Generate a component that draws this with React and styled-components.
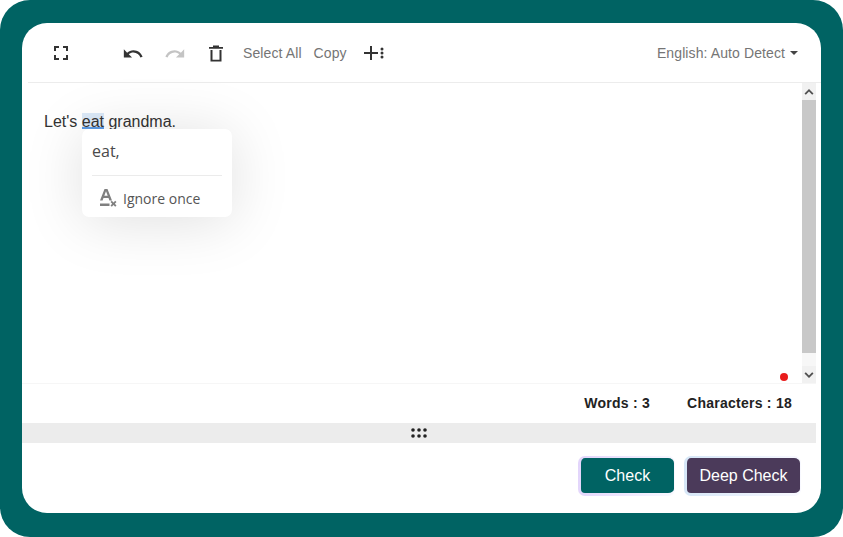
import React from 'react';
import styled, { createGlobalStyle } from 'styled-components';

const Global = createGlobalStyle`
  html, body { margin: 0; padding: 0; background: #fff; overflow: hidden; }
  * { box-sizing: border-box; }
`;

const Frame = styled.div`
  width: 843px;
  height: 537px;
  padding: 23px 22px 24px 22px;
  background: #006363;
  border-radius: 30px;
  font-family: "Liberation Sans", Arial, sans-serif;
`;

const Card = styled.div`
  width: 799px;
  height: 490px;
  background: #fff;
  border-radius: 25px;
  display: flex;
  flex-direction: column;
  overflow: hidden;
`;

const Toolbar = styled.div`
  height: 60px;
  margin-left: 6px;
  border-bottom: 1px solid #ececec;
  display: flex;
  align-items: center;
  padding: 0 23px 0 0;
  flex: none;
`;

const IconSlot = styled.span`
  display: inline-flex;
  align-items: center;
  justify-content: center;
  width: ${p => p.$w}px;
  margin-left: ${p => p.$ml || 0}px;
  color: ${p => (p.$off ? '#c4c4c4' : '#333')};
`;

const ToolText = styled.span`
  font-size: 14px;
  letter-spacing: 0.1px;
  color: #757575;
  margin-left: ${p => p.$ml}px;
`;

const Lang = styled.span`
  margin-left: auto;
  font-size: 14px;
  letter-spacing: 0.1px;
  color: #757575;
  display: flex;
  align-items: center;
  gap: 5px;
`;

const Caret = styled.i`
  width: 0;
  height: 0;
  border-left: 4px solid transparent;
  border-right: 4px solid transparent;
  border-top: 4px solid #444;
`;

const EditorRow = styled.div`
  height: 301px;
  width: 794px;
  position: relative;
  display: flex;
  flex: none;
  border-bottom: 1px solid #f6f6f6;
`;

const Editor = styled.div`
  flex: 1;
  padding: 30px 0 0 22px;
  font-size: 16px;
  line-height: 18px;
  color: #333;
`;

const Flagged = styled.span`
  display: inline-block;
  height: 16px;
  background: #dbe9f8;
  border-bottom: 2px solid #5b9be6;
`;

const Scrollbar = styled.div`
  width: 14px;
  display: flex;
  flex-direction: column;
  background: #f7f7f7;
  flex: none;
`;

const ScrollBtn = styled.div`
  height: 17px;
  background: #f1f1f1;
  display: flex;
  align-items: center;
  justify-content: center;
  color: #505050;
`;

const Thumb = styled.div`
  height: 253px;
  background: #c8c8c8;
`;

const Gap = styled.div`
  flex: 1;
`;

const Popup = styled.div`
  position: absolute;
  left: 60px;
  top: 46px;
  width: 150px;
  height: 88px;
  padding: 0 10px;
  background: #fff;
  border-radius: 7px;
  box-shadow: 0 4px 60px rgba(0, 0, 0, 0.13);
  font-family: "Open Sans", sans-serif;
  color: #4a4a4a;
`;

const Suggestion = styled.div`
  height: 47px;
  padding-top: 10px;
  font-size: 16px;
  line-height: 24px;
  border-bottom: 1px solid #ebebeb;
`;

const Ignore = styled.div`
  display: flex;
  align-items: center;
  gap: 6px;
  height: 44px;
  padding-left: 7px;
  font-size: 14px;
  color: #555;
`;

const IgnoreIcon = styled.span`
  display: inline-flex;
  color: #808080;
`;

const Dot = styled.span`
  position: absolute;
  right: 28px;
  bottom: 2px;
  width: 8px;
  height: 8px;
  border-radius: 50%;
  background: #e91c1c;
`;

const Stats = styled.div`
  height: 39px;
  flex: none;
  display: flex;
  align-items: center;
  justify-content: flex-end;
  gap: 37px;
  padding: 0 29px 2px 0;
  font-size: 14px;
  font-weight: 700;
  letter-spacing: 0.25px;
  color: #222;
`;

const Grip = styled.div`
  width: 794px;
  height: 20px;
  background: #ececec;
  flex: none;
  display: flex;
  align-items: center;
  justify-content: center;
`;

const Actions = styled.div`
  flex: 1;
  display: flex;
  align-items: center;
  justify-content: flex-end;
  gap: 9px;
  padding: 0 20px 5px 0;
`;

const ActionButton = styled.button`
  width: ${p => p.$w}px;
  height: 40px;
  border-style: solid;
  border-color: transparent;
  border-width: 2px 1px 3px 3px;
  border-radius: 7px;
  background:
    linear-gradient(${p => p.$bg}, ${p => p.$bg}) padding-box,
    linear-gradient(100deg, ${p => p.$from}, #f9f9ff) border-box;
  color: #fff;
  font-family: "Liberation Sans", Arial, sans-serif;
  font-size: 16px;
  padding: 2px 0 0;
`;

const Svg = ({ w = 24, h = 24, box = '0 0 24 24', children }) => (
  <svg width={w} height={h} viewBox={box} fill="currentColor">{children}</svg>
);

const App = () => (
  <Frame>
    <Global />
    <Card>
      <Toolbar>
        <IconSlot $w={24} $ml={21}>
          <Svg><path d="M5 5h5v2H7v3H5zM14 5h5v5h-2V7h-3zM5 14h2v3h3v2H5zM17 14h2v5h-5v-2h3z" /></Svg>
        </IconSlot>
        <IconSlot $w={24} $ml={48}>
          <Svg w={22} h={22} box="0 -1 24 24"><path d="M12.500 8c-2.650 0-5.050 1-6.900 2.600L2 7v9h9l-3.620-3.620c1.390-1.160 3.160-1.880 5.120-1.880 3.540 0 6.550 2.310 7.600 5.500l2.370-.78C21.080 11.030 17.150 8 12.500 8z" /></Svg>
        </IconSlot>
        <IconSlot $w={24} $ml={18} $off>
          <Svg w={22} h={22} box="0 -1 24 24"><path d="M11.500 8c2.650 0 5.050 1 6.900 2.600L22 7v9h-9l3.620-3.620C15.230 11.220 13.460 10.500 11.500 10.500c-3.540 0-6.550 2.310-7.600 5.500l-2.370-.78C2.920 11.030 6.850 8 11.500 8z" /></Svg>
        </IconSlot>
        <IconSlot $w={24} $ml={17}>
          <Svg><path d="M9 4.500h6V6h4v1.800H5V6h4zM6.500 9h2v9.700h7V9h2v11.500h-11z" /></Svg>
        </IconSlot>
        <ToolText $ml={15}>Select All</ToolText>
        <ToolText $ml={12}>Copy</ToolText>
        <IconSlot $w={24} $ml={15}>
          <Svg>
            <path d="M2 11h6V5h2v6h6v2h-6v6H8v-6H2z" />
            <circle cx="20" cy="8" r="1.500" />
            <circle cx="20" cy="12" r="1.500" />
            <circle cx="20" cy="16" r="1.500" />
          </Svg>
        </IconSlot>
        <Lang>English: Auto Detect <Caret /></Lang>
      </Toolbar>
      <EditorRow>
        <Editor>
          Let's <Flagged>eat</Flagged> grandma.
        </Editor>
        <Popup>
          <Suggestion>eat,</Suggestion>
          <Ignore>
            <IgnoreIcon>
              <Svg w={18} h={20} box="0 0 18 20">
                <path d="M5.500 1h3l4.500 11.500h-2.600l-.9-2.500H4.500l-.9 2.500H1zM5.300 7.800h3.400L7 3.200zM1 15.500h9.500V18H1z" />
                <path d="M11.500 14l1.300-1.300 1.700 1.700 1.700-1.700 1.300 1.300-1.700 1.700 1.700 1.700-1.300 1.300-1.700-1.700-1.700 1.700-1.300-1.300 1.700-1.700z" />
              </Svg>
            </IgnoreIcon>
            Ignore once
          </Ignore>
        </Popup>
        <Scrollbar>
          <ScrollBtn>
            <Svg w={10} h={8} box="0 0 10 8"><path d="M5 1l4.500 4.500L8.200 6.800 5 3.600 1.800 6.800.5 5.500z" /></Svg>
          </ScrollBtn>
          <Thumb />
          <Gap />
          <ScrollBtn>
            <Svg w={10} h={8} box="0 0 10 8"><path d="M5 7L.5 2.500 1.800 1.200 5 4.400l3.200-3.200 1.300 1.300z" /></Svg>
          </ScrollBtn>
        </Scrollbar>
        <Dot />
      </EditorRow>
      <Stats>
        <span>Words : 3</span>
        <span>Characters : 18</span>
      </Stats>
      <Grip>
        <Svg w={16} h={12} box="0 0 16 12">
          {[2, 8, 14].map(x => [3, 9].map(y => <circle key={`${x}-${y}`} cx={x} cy={y} r="1.800" fill="#222" />))}
        </Svg>
      </Grip>
      <Actions>
        <ActionButton $w={97} $bg="#006363" $from="#e2d4fb">Check</ActionButton>
        <ActionButton $w={117} $bg="#4b3a5a" $from="#d5e6f7">Deep Check</ActionButton>
      </Actions>
    </Card>
  </Frame>
);

export default App;
